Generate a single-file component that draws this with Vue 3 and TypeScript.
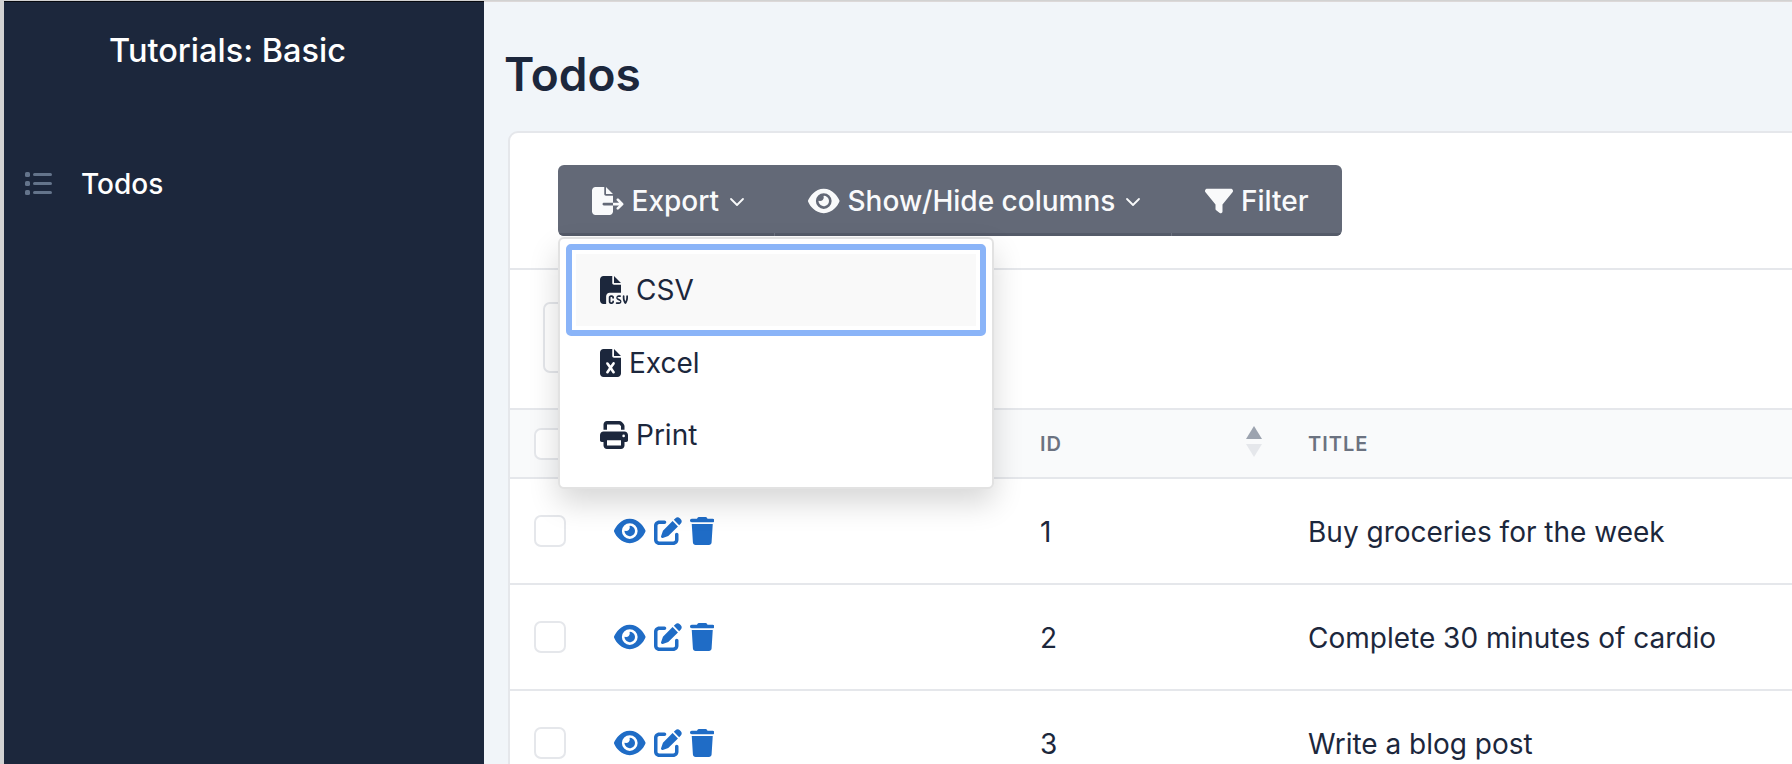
<script setup lang="ts">
const rows = [
  { id: 1, title: "Buy groceries for the week" },
  { id: 2, title: "Complete 30 minutes of cardio" },
  { id: 3, title: "Write a blog post" },
];
</script>

<template>
  <div class="page">
    <aside class="sidebar">
      <div class="brand">Tutorials: Basic</div>
      <nav class="nav">
        <svg class="nav-icon" viewBox="0 0 27 23" fill="#64748b">
          <rect x="0" y="0" width="5" height="5" rx="1.6" />
          <rect x="0" y="9" width="5" height="5" rx="1.6" />
          <rect x="0" y="18" width="5" height="5" rx="1.6" />
          <rect x="8" y="1" width="19" height="3" rx="1.5" />
          <rect x="8" y="10" width="19" height="3" rx="1.5" />
          <rect x="8" y="19" width="19" height="3" rx="1.5" />
        </svg>
        <span class="nav-label">Todos</span>
      </nav>
    </aside>

    <main class="main">
      <h1 class="title">Todos</h1>
      <section class="card">
        <div class="toolbar">
          <div class="btn-group">
            <button class="tool-btn export">
              <svg class="ico" viewBox="0 0 576 512" fill="currentColor"><path d="M0 64C0 28.7 28.7 0 64 0H224V128c0 17.7 14.3 32 32 32H384V288H216c-13.3 0-24 10.7-24 24s10.7 24 24 24H384V448c0 35.3-28.7 64-64 64H64c-35.3 0-64-28.7-64-64V64zM384 336V288H494.1l-39-39c-9.4-9.4-9.4-24.6 0-33.9s24.6-9.4 33.9 0l80 80c9.4 9.4 9.4 24.6 0 33.9l-80 80c-9.4 9.4-24.6 9.4-33.9 0s-9.4-24.6 0-33.9l39-39H384zm0-208H256V0L384 128z" /></svg>
              <span>Export</span>
              <svg class="chev" viewBox="0 0 16 10" fill="none" stroke="currentColor" stroke-width="1.8" stroke-linecap="round" stroke-linejoin="round"><path d="M2 2l6 6 6-6" /></svg>
            </button>
            <button class="tool-btn columns">
              <svg class="ico" viewBox="0 0 576 512" fill="currentColor"><path d="M288 32c-80.8 0-145.5 36.8-192.6 80.6C48.6 156 17.3 208 2.5 243.7c-3.3 7.9-3.3 16.7 0 24.6C17.3 304 48.6 356 95.4 399.4C142.5 443.2 207.2 480 288 480s145.5-36.8 192.6-80.6c46.8-43.5 78.1-95.4 93-131.1c3.3-7.9 3.3-16.7 0-24.6c-14.9-35.7-46.2-87.7-93-131.1C433.5 68.8 368.8 32 288 32zM144 256a144 144 0 1 1 288 0 144 144 0 1 1 -288 0zm144-64c0 35.3-28.7 64-64 64c-7.1 0-13.9-1.2-20.3-3.3c-5.5-1.8-11.9 1.6-11.7 7.4c.3 6.9 1.3 13.8 3.2 20.7c13.7 51.2 66.4 81.6 117.6 67.9s81.6-66.4 67.9-117.6c-11.1-41.5-47.8-69.4-88.6-71.1c-5.8-.2-9.2 6.1-7.4 11.7c2.1 6.4 3.3 13.2 3.3 20.3z" /></svg>
              <span>Show/Hide columns</span>
              <svg class="chev" viewBox="0 0 16 10" fill="none" stroke="currentColor" stroke-width="1.8" stroke-linecap="round" stroke-linejoin="round"><path d="M2 2l6 6 6-6" /></svg>
            </button>
            <button class="tool-btn filter">
              <svg class="ico" viewBox="0 0 512 512" fill="currentColor"><path d="M3.9 54.9C10.5 40.9 24.5 32 40 32H472c15.5 0 29.5 8.9 36.1 22.9s4.6 30.5-5.2 42.5L320 320.9V448c0 12.1-6.8 23.2-17.7 28.6s-23.8 4.3-33.5-3l-64-48c-8.1-6-12.8-15.5-12.8-25.6V320.9L9 97.3C-.7 85.4-2.8 68.8 3.9 54.9z" /></svg>
              <span>Filter</span>
            </button>
          </div>

          <div class="menu">
            <div class="menu-item active">
              <div class="menu-inner">
                <svg class="ico" viewBox="0 0 512 512" fill="currentColor"><path d="M0 64C0 28.7 28.7 0 64 0H224V128c0 17.7 14.3 32 32 32H384V304H176c-35.3 0-64 28.7-64 64V512H64c-35.3 0-64-28.7-64-64V64zm384 64H256V0L384 128zM200 352h16c22.1 0 40 17.9 40 40v8c0 8.8-7.2 16-16 16s-16-7.2-16-16v-8c0-4.4-3.6-8-8-8H200c-4.4 0-8 3.6-8 8v80c0 4.4 3.6 8 8 8h16c4.4 0 8-3.6 8-8v-8c0-8.8 7.2-16 16-16s16 7.2 16 16v8c0 22.1-17.9 40-40 40H200c-22.1 0-40-17.9-40-40V392c0-22.1 17.9-40 40-40zm133.1 0H368c8.8 0 16 7.2 16 16s-7.2 16-16 16H333.1c-7.2 0-13.1 5.9-13.1 13.1c0 5.2 3 9.9 7.8 12l37.4 16.6c16.3 7.2 26.8 23.4 26.8 41.2c0 24.9-20.2 45.1-45.1 45.1H304c-8.8 0-16-7.2-16-16s7.2-16 16-16h52.9c7.2 0 13.1-5.9 13.1-13.1c0-5.2-3-9.9-7.8-12l-37.4-16.6c-16.3-7.2-26.8-23.4-26.8-41.2c0-24.9 20.2-45.1 45.1-45.1zm98.9 0c8.8 0 16 7.2 16 16v31.6c0 23 5.5 45.6 16 66c10.5-20.3 16-42.9 16-66V368c0-8.8 7.2-16 16-16s16 7.2 16 16v31.6c0 34.7-10.3 68.7-29.6 97.6l-5.1 7.7c-3 4.5-8 7.1-13.3 7.1s-10.3-2.7-13.3-7.1l-5.1-7.7c-19.3-28.9-29.6-62.9-29.6-97.6V368c0-8.8 7.2-16 16-16z" /></svg>
                <span>CSV</span>
              </div>
            </div>
            <div class="menu-item">
              <div class="menu-inner">
                <svg class="ico" viewBox="0 0 384 512" fill="currentColor"><path d="M64 0C28.7 0 0 28.7 0 64V448c0 35.3 28.7 64 64 64H320c35.3 0 64-28.7 64-64V160H256c-17.7 0-32-14.3-32-32V0H64zM256 0V128H384L256 0zM155.7 250.2L192 302.1l36.3-51.9c7.6-10.9 22.6-13.5 33.4-5.9s13.5 22.6 5.9 33.4L221.3 344l46.4 66.2c7.6 10.9 5 25.8-5.9 33.4s-25.8 5-33.4-5.9L192 385.8l-36.3 51.9c-7.6 10.9-22.6 13.5-33.4 5.9s-13.5-22.6-5.9-33.4L162.7 344l-46.4-66.2c-7.6-10.9-5-25.8 5.9-33.4s25.8-5 33.4 5.9z" /></svg>
                <span>Excel</span>
              </div>
            </div>
            <div class="menu-item">
              <div class="menu-inner">
                <svg class="ico" viewBox="0 0 512 512" fill="currentColor"><path d="M128 0C92.7 0 64 28.7 64 64v96h64V64H354.7L384 93.3V160h64V93.3c0-17-6.7-33.3-18.7-45.3L400 18.7C388 6.7 371.7 0 354.7 0H128zM384 352v32 64H128V384 368 352H384zm64 32h32c17.7 0 32-14.3 32-32V256c0-35.3-28.7-64-64-64H64c-35.3 0-64 28.7-64 64v96c0 17.7 14.3 32 32 32H64v64c0 35.3 28.7 64 64 64H384c35.3 0 64-28.7 64-64V384zM432 248a24 24 0 1 1 0 48 24 24 0 1 1 0-48z" /></svg>
                <span>Print</span>
              </div>
            </div>
          </div>
        </div>

        <div class="search-bar"><div class="search-box"></div></div>

        <div class="grid-row head">
          <div class="cell-check"><span class="check"></span></div>
          <div></div>
          <div class="head-id">
            <span>ID</span>
            <span class="sort"><i class="up"></i><i class="down"></i></span>
          </div>
          <div>TITLE</div>
        </div>

        <div v-for="row in rows" :key="row.id" class="grid-row body">
          <div class="cell-check"><span class="check"></span></div>
          <div class="actions">
            <svg class="ico" viewBox="0 0 576 512" fill="currentColor"><path d="M288 32c-80.8 0-145.5 36.8-192.6 80.6C48.6 156 17.3 208 2.5 243.7c-3.3 7.9-3.3 16.7 0 24.6C17.3 304 48.6 356 95.4 399.4C142.5 443.2 207.2 480 288 480s145.5-36.8 192.6-80.6c46.8-43.5 78.1-95.4 93-131.1c3.3-7.9 3.3-16.7 0-24.6c-14.9-35.7-46.2-87.7-93-131.1C433.5 68.8 368.8 32 288 32zM144 256a144 144 0 1 1 288 0 144 144 0 1 1 -288 0zm144-64c0 35.3-28.7 64-64 64c-7.1 0-13.9-1.2-20.3-3.3c-5.5-1.8-11.9 1.6-11.7 7.4c.3 6.9 1.3 13.8 3.2 20.7c13.7 51.2 66.4 81.6 117.6 67.9s81.6-66.4 67.9-117.6c-11.1-41.5-47.8-69.4-88.6-71.1c-5.8-.2-9.2 6.1-7.4 11.7c2.1 6.4 3.3 13.2 3.3 20.3z" /></svg>
            <svg class="ico" viewBox="0 0 512 512" fill="currentColor"><path d="M471.6 21.7c-21.9-21.9-57.3-21.9-79.2 0L362.3 51.7l97.9 97.9 30.1-30.1c21.9-21.9 21.9-57.3 0-79.2L471.6 21.7zm-299.2 220c-6.1 6.1-10.8 13.6-13.5 21.9l-29.6 88.8c-2.9 8.6-.6 18.1 5.8 24.6s15.9 8.7 24.6 5.8l88.8-29.6c8.2-2.7 15.7-7.4 21.9-13.5L437.7 172.3 339.7 74.3 172.4 241.7zM96 64C43 64 0 107 0 160V416c0 53 43 96 96 96H352c53 0 96-43 96-96V320c0-17.7-14.3-32-32-32s-32 14.3-32 32v96c0 17.7-14.3 32-32 32H96c-17.7 0-32-14.3-32-32V160c0-17.7 14.3-32 32-32h96c17.7 0 32-14.3 32-32s-14.3-32-32-32H96z" /></svg>
            <svg class="ico" viewBox="0 0 448 512" fill="currentColor"><path d="M135.2 17.7L128 32H32C14.3 32 0 46.3 0 64S14.3 96 32 96H416c17.7 0 32-14.3 32-32s-14.3-32-32-32H320l-7.2-14.3C307.4 6.8 296.3 0 284.2 0H163.8c-12.1 0-23.2 6.8-28.6 17.7zM416 128H32L53.2 467c1.6 25.3 22.6 45 47.9 45H346.9c25.3 0 46.3-19.7 47.9-45L416 128z" /></svg>
          </div>
          <div class="text-cell">{{ row.id }}</div>
          <div class="text-cell">{{ row.title }}</div>
        </div>
      </section>
    </main>
  </div>
</template>

<style>
html,
body {
  margin: 0;
  overflow: hidden;
  background: #d2d2d2;
}
</style>

<style scoped>
.page {
  display: flex;
  height: 763px;
  padding: 1px 0 0 4px;
  overflow: hidden;
  font-family: Inter, "Liberation Sans", sans-serif;
  color: #1c273c;
}

.sidebar {
  flex: 0 0 480px;
  background: #1c273c;
  border-top: 1px solid #07090f;
  color: #fff;
}

.brand {
  padding: 30px 33px 0 0;
  height: 45px;
  text-align: center;
  font-size: 32.5px;
  font-weight: 500;
  line-height: 38px;
}

.nav {
  display: flex;
  align-items: center;
  margin-top: 88px;
  padding-left: 21px;
  font-size: 28px;
  font-weight: 500;
  line-height: 34px;
}

.nav-label {
  padding-top: 2px;
}

.nav-icon {
  width: 27px;
  height: 23px;
  margin-right: 29px;
}

.main {
  flex: 1;
  min-width: 0;
  background: #f1f5f9;
  border-top: 1px solid #dcd8d8;
  padding-left: 24px;
  overflow: hidden;
}

.title {
  margin: 44px 0 0 -4px;
  font-size: 46px;
  font-weight: 600;
  line-height: 56px;
  height: 85px;
}

.card {
  width: 1400px;
  height: 700px;
  background: #fff;
  border: 2px solid #e5e7eb;
  border-radius: 10px 0 0 0;
}

.toolbar {
  position: relative;
  height: 137px;
  padding: 32px 0 0 48px;
  box-sizing: border-box;
  border-bottom: 2px solid #e5e7eb;
}

.btn-group {
  display: inline-flex;
  height: 71px;
  border-radius: 6px;
  overflow: hidden;
  background: #636977;
  color: #f9fafb;
}

.tool-btn {
  position: relative;
  display: flex;
  align-items: center;
  box-sizing: border-box;
  border: 0;
  border-bottom: 3px solid #555b69;
  background: transparent;
  color: inherit;
  font: inherit;
  font-size: 28px;
  font-weight: 500;
  padding: 3px 0 0 34px;
  white-space: nowrap;
}

.tool-btn + .tool-btn::before {
  content: "";
  position: absolute;
  left: 0;
  bottom: -3px;
  width: 1px;
  height: 3px;
  background: #6d7380;
}

.export {
  width: 216px;
}

.columns {
  width: 397px;
}

.filter {
  width: 171px;
}

.ico {
  height: 28px;
  width: auto;
  flex: none;
}

.tool-btn .ico {
  margin-right: 8px;
}

.chev {
  width: 16px;
  height: 10px;
  margin-left: 10px;
  margin-top: 3px;
}

.menu {
  position: absolute;
  left: 48px;
  top: 104px;
  width: 436px;
  height: 252px;
  box-sizing: border-box;
  padding: 5px 6px;
  background: #fff;
  border: 2px solid #e2e2e2;
  border-radius: 6px;
  box-shadow: 0 14px 30px rgba(0, 0, 0, 0.16);
  z-index: 2;
  font-size: 28px;
}

.menu-item {
  height: 72px;
  padding: 12px 0 0 34px;
  box-sizing: border-box;
}

.menu-item.active {
  height: 92px;
  border: 6px solid #8ab4f8;
  border-radius: 5px;
  padding: 4px;
  background: #f9f9f9;
  background-clip: content-box;
}

.menu-item.active .menu-inner {
  padding: 21px 0 0 24px;
}

.menu-inner {
  display: flex;
  align-items: center;
  line-height: 30px;
  gap: 8px;
}

.search-bar {
  height: 138px;
  box-sizing: border-box;
  padding: 32px 0 0 33px;
}

.search-box {
  width: 300px;
  height: 71px;
  box-sizing: border-box;
  border: 2px solid #e5e7eb;
  border-radius: 7px;
}

.grid-row {
  display: grid;
  grid-template-columns: 104px 426px 268px 1fr;
  align-items: center;
}

.head {
  height: 71px;
  box-sizing: border-box;
  background: #f9fafb;
  border-top: 2px solid #e5e7eb;
  border-bottom: 2px solid #e5e7eb;
  font-size: 20px;
  font-weight: 600;
  letter-spacing: 1px;
  color: #6b7280;
}

.body {
  height: 106px;
  box-sizing: border-box;
  border-bottom: 2px solid #e5e7eb;
  font-size: 28px;
}

.text-cell {
  padding-top: 2px;
}

.cell-check {
  padding-left: 24px;
  display: flex;
}

.check {
  width: 32px;
  height: 32px;
  box-sizing: border-box;
  background: #fff;
  border: 2px solid #e5e7eb;
  border-radius: 7px;
}

.actions {
  display: flex;
  align-items: center;
  gap: 8px;
  color: #1f6cc6;
}

.head-id {
  display: flex;
  align-items: center;
  justify-content: space-between;
  padding-right: 46px;
}

.sort {
  display: flex;
  flex-direction: column;
  gap: 5px;
  margin-top: -4px;
}

.sort i {
  width: 0;
  height: 0;
  border-left: 8px solid transparent;
  border-right: 8px solid transparent;
}

.sort .up {
  border-bottom: 13px solid #9ca3af;
}

.sort .down {
  border-top: 13px solid #e5e7eb;
}
</style>
